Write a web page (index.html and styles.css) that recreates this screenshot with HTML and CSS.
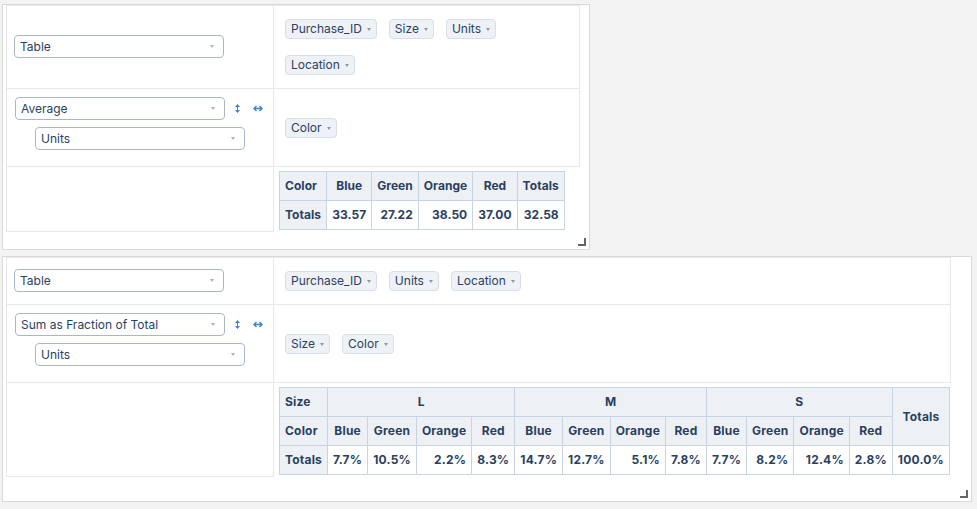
FILE: index.html
```html
<!DOCTYPE html>
<html>
<head>
<meta charset="utf-8">
<link rel="stylesheet" href="styles.css">
</head>
<body>
<div class="panel panel-a">
  <div class="ui ui-a">
    <div class="cell renderers">
      <div class="dropdown"><span>Table</span><span class="dd-icon"></span></div>
    </div>
    <div class="cell axis">
      <ul class="chips">
        <li><span class="chip">Purchase_ID<span class="tri"></span></span></li>
        <li><span class="chip">Size<span class="tri"></span></span></li>
        <li><span class="chip">Units<span class="tri"></span></span></li>
        <li><span class="chip">Location<span class="tri"></span></span></li>
      </ul>
    </div>
    <div class="cell vals">
      <div class="vals-line">
        <div class="dropdown"><span>Average</span><span class="dd-icon"></span></div>
        <span class="order"><svg width="5" height="9" viewBox="0 0 5 9"><path d="M2.5 0L5 3H0Z M2.5 9L5 6H0Z" fill="#3b83cf"/><rect x="2" y="2" width="1" height="5" fill="#3b83cf"/></svg></span>
        <span class="order"><svg width="10" height="7" viewBox="0 0 10 7"><path d="M1 3.5H9 M3.5 1L1 3.5L3.5 6 M6.5 1L9 3.5L6.5 6" fill="none" stroke="#3b83cf" stroke-width="1.4"/></svg></span>
      </div>
      <div class="dropdown"><span>Units</span><span class="dd-icon"></span></div>
    </div>
    <div class="cell axis">
      <ul class="chips">
        <li><span class="chip">Color<span class="tri"></span></span></li>
      </ul>
    </div>
    <div class="cell rows"></div>
    <div class="output">
      <table class="pvt pvt-small">
        <thead>
          <tr><th class="axis-label">Color</th><th class="col-label">Blue</th><th class="col-label">Green</th><th class="col-label">Orange</th><th class="col-label">Red</th><th class="col-label">Totals</th></tr>
        </thead>
        <tbody>
          <tr><th class="axis-label">Totals</th><td>33.57</td><td>27.22</td><td>38.50</td><td>37.00</td><td>32.58</td></tr>
        </tbody>
      </table>
    </div>
  </div>
</div>

<div class="panel panel-b">
  <div class="ui ui-b">
    <div class="cell renderers short">
      <div class="dropdown"><span>Table</span><span class="dd-icon"></span></div>
    </div>
    <div class="cell axis">
      <ul class="chips">
        <li><span class="chip">Purchase_ID<span class="tri"></span></span></li>
        <li><span class="chip">Units<span class="tri"></span></span></li>
        <li><span class="chip">Location<span class="tri"></span></span></li>
      </ul>
    </div>
    <div class="cell vals">
      <div class="vals-line">
        <div class="dropdown"><span>Sum as Fraction of Total</span><span class="dd-icon"></span></div>
        <span class="order"><svg width="5" height="9" viewBox="0 0 5 9"><path d="M2.5 0L5 3H0Z M2.5 9L5 6H0Z" fill="#3b83cf"/><rect x="2" y="2" width="1" height="5" fill="#3b83cf"/></svg></span>
        <span class="order"><svg width="10" height="7" viewBox="0 0 10 7"><path d="M1 3.5H9 M3.5 1L1 3.5L3.5 6 M6.5 1L9 3.5L6.5 6" fill="none" stroke="#3b83cf" stroke-width="1.4"/></svg></span>
      </div>
      <div class="dropdown"><span>Units</span><span class="dd-icon"></span></div>
    </div>
    <div class="cell axis">
      <ul class="chips">
        <li><span class="chip">Size<span class="tri"></span></span></li>
        <li><span class="chip">Color<span class="tri"></span></span></li>
      </ul>
    </div>
    <div class="cell rows"></div>
    <div class="output">
      <table class="pvt">
        <thead>
          <tr><th class="axis-label">Size</th><th class="col-label" colspan="4">L</th><th class="col-label" colspan="4">M</th><th class="col-label" colspan="4">S</th><th class="col-label total-label" rowspan="2">Totals</th></tr>
          <tr><th class="axis-label">Color</th><th class="col-label">Blue</th><th class="col-label">Green</th><th class="col-label">Orange</th><th class="col-label">Red</th><th class="col-label">Blue</th><th class="col-label">Green</th><th class="col-label">Orange</th><th class="col-label">Red</th><th class="col-label">Blue</th><th class="col-label">Green</th><th class="col-label">Orange</th><th class="col-label">Red</th></tr>
        </thead>
        <tbody>
          <tr><th class="axis-label">Totals</th><td>7.7%</td><td>10.5%</td><td>2.2%</td><td>8.3%</td><td>14.7%</td><td>12.7%</td><td>5.1%</td><td>7.8%</td><td>7.7%</td><td>8.2%</td><td>12.4%</td><td>2.8%</td><td>100.0%</td></tr>
        </tbody>
      </table>
    </div>
  </div>
</div>
</body>
</html>
```

FILE: styles.css
```css
* { box-sizing: border-box; }
html, body { margin: 0; }
body {
  background: #f3f3f3;
  padding: 4px 0 0 2px;
  font-family: Inter, "Noto Sans", sans-serif;
  font-size: 12px;
  color: #2a3f5f;
}
.panel {
  position: relative;
  background: #fff;
  border: 1px solid #d9d9d9;
  height: 246px;
  padding-left: 3px;
}
.panel::after {
  content: "";
  position: absolute;
  right: 3px;
  bottom: 3px;
  width: 6px;
  height: 6px;
  border-right: 2px solid #666;
  border-bottom: 2px solid #666;
}
.panel-a { width: 588px; }
.panel-b { width: 970px; margin-top: 6px; }

.ui {
  display: grid;
  width: max-content;
  border-top: 1px solid #e3e9ec;
  border-left: 1px solid #e3e9ec;
}
.ui-a { grid-template-columns: 267px 306px; }
.ui-b { grid-template-columns: 267px 677px; }
.cell {
  border-right: 1px solid #e3e9ec;
  border-bottom: 1px solid #e3e9ec;
}
.renderers {
  display: flex;
  align-items: center;
  padding: 0 0 1px 7px;
}
.axis {
  display: flex;
  align-items: center;
  padding: 5px;
}
.chips {
  list-style: none;
  margin: 0;
  padding: 0;
  display: flex;
  flex-wrap: wrap;
}
.chips li {
  padding: 8px 6px;
}
.chip {
  display: flex;
  align-items: center;
  height: 20px;
  padding: 0 5px;
  background: #eef1f5;
  border: 1px solid #d6dee7;
  border-radius: 4px;
  white-space: nowrap;
  line-height: 18px;
}
.tri {
  width: 0;
  height: 0;
  margin-left: 5px;
  margin-top: 1px;
  border-left: 2.5px solid transparent;
  border-right: 2.5px solid transparent;
  border-top: 3px solid #8a96a8;
}
.dropdown {
  width: 210px;
  height: 23px;
  display: flex;
  align-items: center;
  justify-content: space-between;
  padding: 0 9px 0 5px;
  border: 1px solid #a9b6c9;
  border-radius: 4px;
  background: #fff;
  line-height: 17px;
}
.dd-icon {
  width: 0;
  height: 0;
  border-left: 2.5px solid transparent;
  border-right: 2.5px solid transparent;
  border-top: 3px solid #aab3c0;
}
.vals {
  display: flex;
  flex-direction: column;
  align-items: center;
  gap: 7px;
  padding: 8px 0 16px;
}
.vals-line {
  display: flex;
  align-items: center;
}
.order {
  width: 15px;
  margin-left: 5px;
  display: flex;
  justify-content: center;
}
.output {
  padding: 4px 0 2px 5px;
}
.pvt {
  border-collapse: collapse;
  font-weight: 700;
  line-height: 18px;
  letter-spacing: 0.2px;
}
.pvt-small { letter-spacing: 0.05px; }
.pvt th, .pvt td {
  border: 1px solid #c9d4e2;
  padding: 5px;
  white-space: nowrap;
}
.pvt th {
  background: #edf1f6;
}
.pvt .axis-label { text-align: left; }
.pvt .col-label { text-align: center; }
.pvt td {
  background: #fff;
  text-align: right;
}
```
